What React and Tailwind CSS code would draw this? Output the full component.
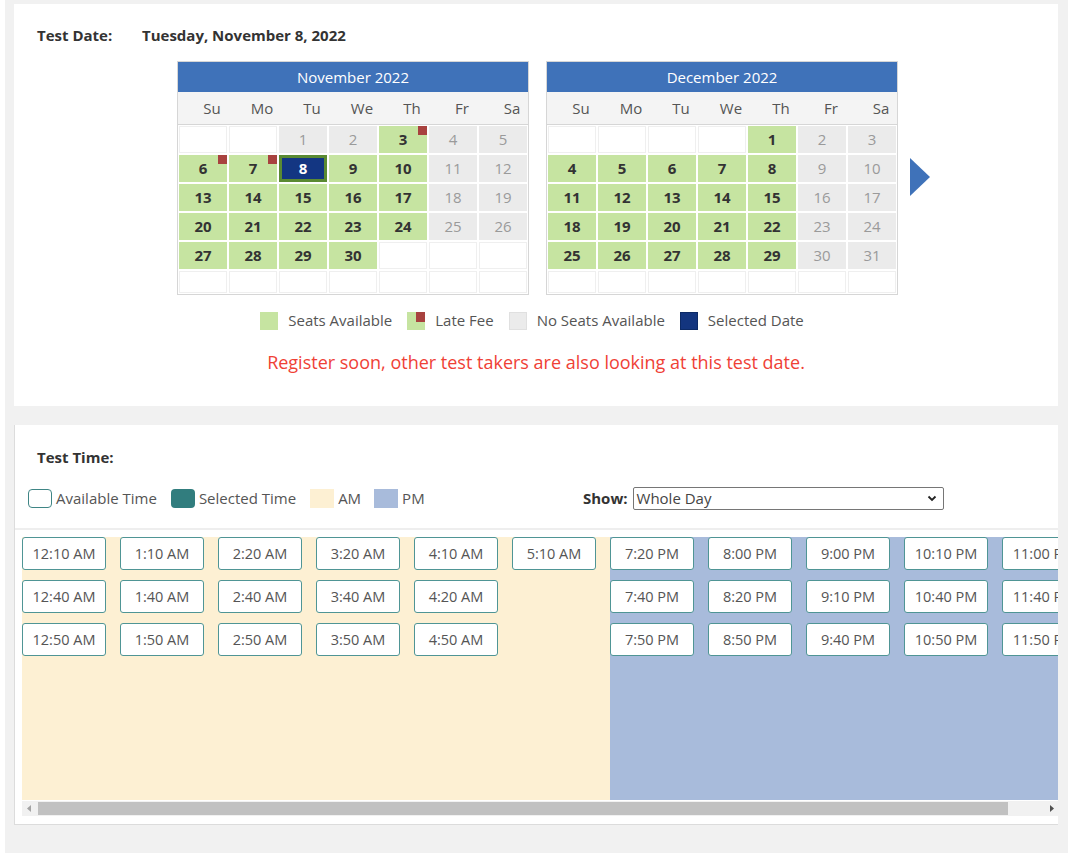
import React from "react";

const DAYS = ["Su", "Mo", "Tu", "We", "Th", "Fr", "Sa"];

// e = empty, g = no seats, a = available, l = late fee, s = selected
const NOV = [
  [["", "e"], ["", "e"], ["1", "g"], ["2", "g"], ["3", "l"], ["4", "g"], ["5", "g"]],
  [["6", "l"], ["7", "l"], ["8", "s"], ["9", "a"], ["10", "a"], ["11", "g"], ["12", "g"]],
  [["13", "a"], ["14", "a"], ["15", "a"], ["16", "a"], ["17", "a"], ["18", "g"], ["19", "g"]],
  [["20", "a"], ["21", "a"], ["22", "a"], ["23", "a"], ["24", "a"], ["25", "g"], ["26", "g"]],
  [["27", "a"], ["28", "a"], ["29", "a"], ["30", "a"], ["", "e"], ["", "e"], ["", "e"]],
];

const DEC = [
  [["", "e"], ["", "e"], ["", "e"], ["", "e"], ["1", "a"], ["2", "g"], ["3", "g"]],
  [["4", "a"], ["5", "a"], ["6", "a"], ["7", "a"], ["8", "a"], ["9", "g"], ["10", "g"]],
  [["11", "a"], ["12", "a"], ["13", "a"], ["14", "a"], ["15", "a"], ["16", "g"], ["17", "g"]],
  [["18", "a"], ["19", "a"], ["20", "a"], ["21", "a"], ["22", "a"], ["23", "g"], ["24", "g"]],
  [["25", "a"], ["26", "a"], ["27", "a"], ["28", "a"], ["29", "a"], ["30", "g"], ["31", "g"]],
];

function DayCell({ label, type }) {
  if (type === "e") {
    return <div className="h-[27px] bg-white border border-[#efefef]" />;
  }
  if (type === "g") {
    return (
      <div className="h-[27px] bg-[#ebebeb] flex items-center justify-center text-[15px] text-[#9a9a9a]">
        {label}
      </div>
    );
  }
  if (type === "s") {
    return (
      <div className="h-[27px] bg-[#133682] border-[3px] border-[#5a8a32] flex items-center justify-center text-[15px] font-bold text-white">
        {label}
      </div>
    );
  }
  return (
    <div className="relative h-[27px] bg-[#c6e4a1] flex items-center justify-center text-[15px] font-bold text-[#333]">
      {label}
      {type === "l" && (
        <div className="absolute top-0 right-0 w-[9px] h-[9px] bg-[#a8423f]" />
      )}
    </div>
  );
}

function Calendar({ title, rows }) {
  return (
    <div className="w-[352px] border border-[#d6d6d6] bg-white">
      <div className="h-[30px] bg-[#3f72b9] text-white text-[15px] flex items-center justify-center">
        {title}
      </div>
      <div className="h-[33px] bg-[#f4f4f4] border-b border-[#d6d6d6] grid grid-cols-7 items-center text-[15px] text-[#555]">
        {DAYS.map((d) => (
          <div key={d} className="pl-[18px] text-center">
            {d}
          </div>
        ))}
      </div>
      <div className="p-[1px] grid grid-cols-7 gap-[2px]">
        {rows.flat().map(([label, type], i) => (
          <DayCell key={i} label={label} type={type} />
        ))}
        {DAYS.map((d) => (
          <div key={"b" + d} className="h-[22px] bg-white border border-[#efefef]" />
        ))}
      </div>
    </div>
  );
}

const AM_COLS = [
  ["12:10 AM", "12:40 AM", "12:50 AM"],
  ["1:10 AM", "1:40 AM", "1:50 AM"],
  ["2:20 AM", "2:40 AM", "2:50 AM"],
  ["3:20 AM", "3:40 AM", "3:50 AM"],
  ["4:10 AM", "4:20 AM", "4:50 AM"],
  ["5:10 AM"],
];

const PM_COLS = [
  ["7:20 PM", "7:40 PM", "7:50 PM"],
  ["8:00 PM", "8:20 PM", "8:50 PM"],
  ["9:00 PM", "9:10 PM", "9:40 PM"],
  ["10:10 PM", "10:40 PM", "10:50 PM"],
  ["11:00 PM", "11:40 PM", "11:50 PM"],
];

function TimeBtn({ t }) {
  return (
    <div className="w-[84px] h-[33px] shrink-0 rounded-[3px] border border-[#4f9595] bg-white flex items-center justify-center text-[14.5px] text-[#555] whitespace-nowrap">
      {t}
    </div>
  );
}

function Block({ cols, bg }) {
  return (
    <div className={"flex shrink-0 h-[263px] " + bg}>
      {cols.map((col, i) => (
        <div key={i} className="flex flex-col gap-[10px] mr-[14px] w-[84px]">
          {col.map((t) => (
            <TimeBtn key={t} t={t} />
          ))}
        </div>
      ))}
    </div>
  );
}

export default function App() {
  return (
    <div className="w-[1080px] h-[866px] bg-white font-['Open_Sans',sans-serif] text-[#333]">
      <div className="ml-[5px] w-[1063px] h-[853px] bg-[#f1f1f1] pt-[4px] pl-[9px] pr-[10px] flex flex-col">
        {/* Test date card */}
        <div className="w-[1044px] h-[402px] bg-white flex flex-col pt-[21px]">
          <div className="flex text-[15px] font-bold leading-[20px] ml-[23px]">
            <span className="w-[105px]">Test Date:</span>
            <span>Tuesday, November 8, 2022</span>
          </div>
          <div className="flex items-start mt-[16px] ml-[163px]">
            <Calendar title="November 2022" rows={NOV} />
            <div className="ml-[17px]">
              <Calendar title="December 2022" rows={DEC} />
            </div>
            <svg className="ml-[12px] mt-[97px]" width="20" height="38" viewBox="0 0 20 38">
              <polygon points="0,0 20,19 0,38" fill="#3f72b9" />
            </svg>
          </div>
          <div className="flex items-center justify-center mt-[16px] ml-[-8px] text-[15px] text-[#555] leading-[19px]">
            <div className="w-[18px] h-[18px] bg-[#c6e4a1]" />
            <span className="ml-[10px]">Seats Available</span>
            <div className="relative ml-[15px] w-[18px] h-[18px] bg-[#c6e4a1]">
              <div className="absolute top-0 right-0 w-[9px] h-[10px] bg-[#a8423f]" />
            </div>
            <span className="ml-[10px]">Late Fee</span>
            <div className="ml-[15px] w-[18px] h-[18px] bg-[#ebebeb] border border-[#e0e0e0]" />
            <span className="ml-[10px]">No Seats Available</span>
            <div className="ml-[15px] w-[18px] h-[18px] bg-[#13357f] border border-[#0c2a66]" />
            <span className="ml-[10px]">Selected Date</span>
          </div>
          <div className="mt-[20px] text-center text-[18px] leading-[25px] text-[#ef4136]">
            Register soon, other test takers are also looking at this test date.
          </div>
        </div>

        {/* Test time card */}
        <div className="mt-[19px] w-[1044px] h-[400px] bg-white border-l border-b border-[#dcdcdc] flex flex-col pt-[22px] overflow-hidden">
          <div className="text-[15px] font-bold leading-[20px] ml-[22px]">Test Time:</div>
          <div className="flex items-center mt-[19px] ml-[13px] h-[24px] text-[15px] text-[#555]">
            <div className="flex items-center w-[555px]">
              <div className="w-[24px] h-[19px] rounded-[4px] border border-[#3f8585] bg-white" />
              <span className="ml-[4px]">Available Time</span>
              <div className="ml-[14px] w-[24px] h-[19px] rounded-[4px] bg-[#317d7e]" />
              <span className="ml-[4px]">Selected Time</span>
              <div className="ml-[14px] w-[24px] h-[19px] bg-[#fdf0d3]" />
              <span className="ml-[4px]">AM</span>
              <div className="ml-[13px] w-[24px] h-[19px] bg-[#a8bbdb]" />
              <span className="ml-[4px]">PM</span>
            </div>
            <span className="font-bold text-[#333]">Show:</span>
            <div className="ml-[5px] w-[311px] h-[23px] border border-[#767676] rounded-[2px] flex items-center justify-between pl-[3px] pr-[6px] text-[#444]">
              <span>Whole Day</span>
              <svg width="10" height="7" viewBox="0 0 10 7">
                <polyline points="1.5,1.5 5,5 8.5,1.5" fill="none" stroke="#222" strokeWidth="1.8" />
              </svg>
            </div>
          </div>
          <div className="mt-[18px] border-t-2 border-[#eeeeee] pt-[7px] pl-[7px]">
            <div className="w-[1036px] overflow-hidden">
              <div className="flex w-max">
                <Block cols={AM_COLS} bg="bg-[#fdf0d3]" />
                <Block cols={PM_COLS} bg="bg-[#a8bbdb]" />
              </div>
            </div>
            {/* scrollbar */}
            <div className="relative w-[1036px] h-[15px] mt-[1px] bg-[#f1f1f1] flex items-center">
              <svg className="absolute left-[5px] top-[4px]" width="4" height="7" viewBox="0 0 4 7">
                <polygon points="4,0 0,3.5 4,7" fill="#a3a3a3" />
              </svg>
              <div className="absolute left-[16px] top-[1px] w-[970px] h-[13px] bg-[#c1c1c1]" />
              <svg className="absolute right-[4px] top-[4px]" width="4" height="7" viewBox="0 0 4 7">
                <polygon points="0,0 4,3.5 0,7" fill="#505050" />
              </svg>
            </div>
          </div>
        </div>
      </div>
    </div>
  );
}
